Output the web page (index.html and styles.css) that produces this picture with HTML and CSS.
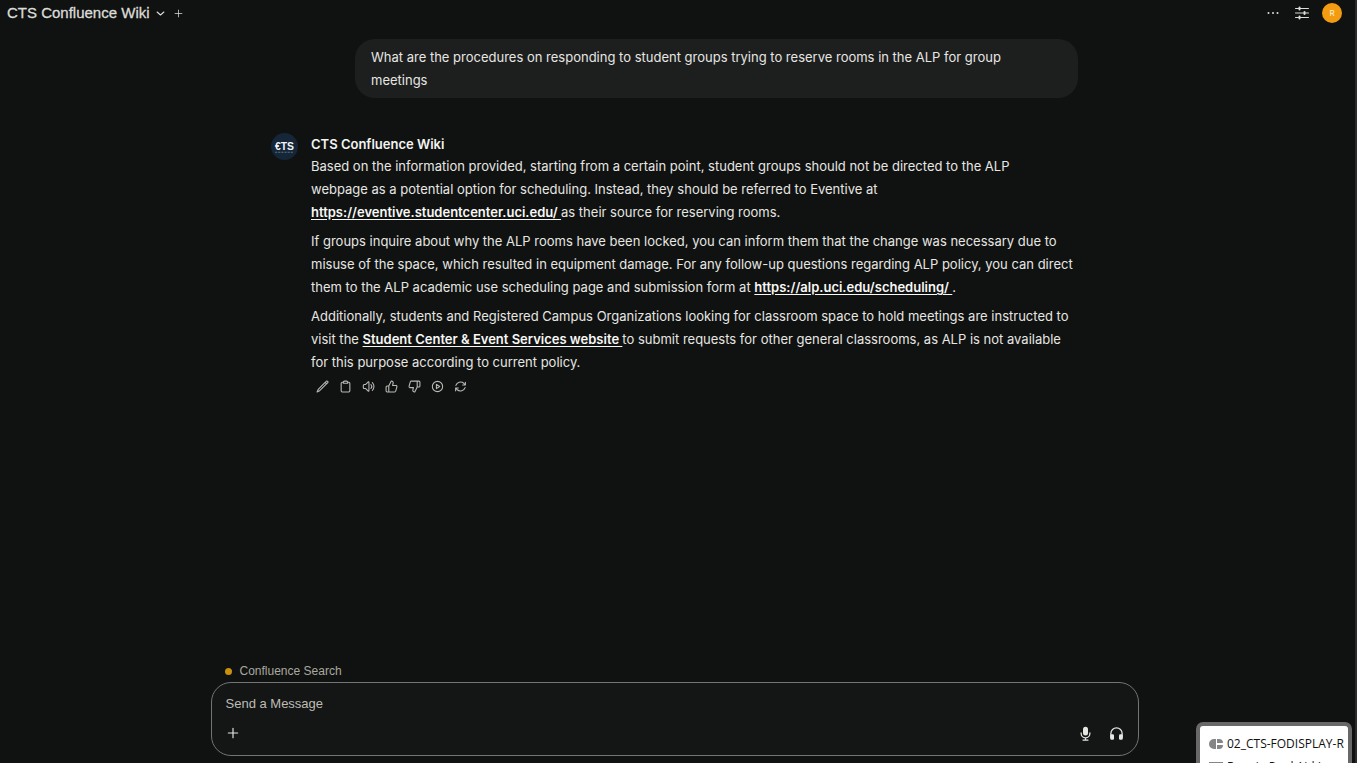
FILE: index.html
```html
<!DOCTYPE html>
<html lang="en">
<head>
<meta charset="utf-8">
<title>CTS Confluence Wiki</title>
<link rel="stylesheet" href="styles.css">
</head>
<body>
<div class="app">
  <header class="topbar">
    <button class="model-picker" type="button">CTS Confluence Wiki
      <svg class="chevron" viewBox="0 0 24 24"><path d="m3 8 9 8 9-8"/></svg>
    </button>
    <button class="icon-button add-model" type="button" aria-label="Add model"><svg viewBox="0 0 24 24"><path d="M12 3v18M3 12h18"/></svg></button>
    <div class="top-actions">
      <button class="icon-button" type="button" aria-label="More"><svg class="dots" viewBox="0 0 14 14"><circle cx="2.500" cy="7" r="1"/><circle cx="7" cy="7" r="1"/><circle cx="11.500" cy="7" r="1"/></svg></button>
      <button class="icon-button" type="button" aria-label="Controls"><svg class="controls" viewBox="0 0 14 14"><path d="M.5 2.500h13M.5 7h13M.5 11.500h13"/><path class="knobs" d="M4.500 1.500v2M9.500 6v2M4.500 10.500v2"/></svg></button>
      <button class="user-badge" type="button" aria-label="Account">R</button>
    </div>
  </header>
  <main class="thread">
    <p class="question">What are the procedures on responding to student groups trying to reserve rooms in the ALP for group meetings</p>
    <article class="answer">
      <svg class="avatar" viewBox="0 0 26 26" role="img" aria-label="CTS"><circle cx="13" cy="13" r="13"/><text x="13" y="16" text-anchor="middle">€TS</text><path d="M4 18.500h18"/></svg>
      <div class="answer-body">
        <h2>CTS Confluence Wiki</h2>
        <p class="lead">Based on the information provided, starting from a certain point, student groups should not be directed to the ALP webpage as a potential option for scheduling. Instead, they should be referred to Eventive at <a href="https://eventive.studentcenter.uci.edu/">https://eventive.studentcenter.uci.edu/ </a>as their source for reserving rooms.</p>
        <p>If groups inquire about why the ALP rooms have been locked, you can inform them that the change was necessary due to misuse of the space, which resulted in equipment damage. For any follow-up questions regarding ALP policy, you can direct them to the ALP academic use scheduling page and submission form at <a href="https://alp.uci.edu/scheduling/">https://alp.uci.edu/scheduling/ </a>.</p>
        <p>Additionally, students and Registered Campus Organizations looking for classroom space to hold meetings are instructed to visit the <a href="#services">Student Center &amp; Event Services website </a>to submit requests for other general classrooms, as ALP is not available for this purpose according to current policy.</p>
        <div class="message-actions">
          <button type="button" aria-label="Edit"><svg viewBox="0 0 24 24"><path d="m16.900 4.500 1.700-1.700a1.900 1.900 0 1 1 2.600 2.600L6.800 19.800 2 22l2.200-4.800L16.900 4.500Zm0 0 2.600 2.600"/></svg></button>
          <button type="button" aria-label="Copy"><svg viewBox="0 0 24 24"><path d="M8 4H6a2 2 0 0 0-2 2v14a2 2 0 0 0 2 2h12a2 2 0 0 0 2-2V6a2 2 0 0 0-2-2h-2M10 2h4a2 2 0 0 1 2 2v2H8V4a2 2 0 0 1 2-2Z"/></svg></button>
          <button type="button" aria-label="Read aloud"><svg viewBox="0 0 24 24"><path d="M19.100 4.900a10 10 0 0 1 0 14.200M16.500 8.500a5 5 0 0 1 0 7M6.800 8.200l4.700-4.700c.5-.5 1.300-.2 1.300.5v16c0 .7-.8 1-1.300.5l-4.700-4.700H4.500c-.9 0-1.700-.5-1.900-1.400a10 10 0 0 1 0-4.800c.2-.9 1-1.400 1.900-1.400Z"/></svg></button>
          <button type="button" aria-label="Good response"><svg viewBox="0 0 24 24"><path d="M7 11v11M15 6l-1 4h6a2 2 0 0 1 2 2.600l-2.300 8A2 2 0 0 1 17.700 22H4a2 2 0 0 1-2-2v-7a2 2 0 0 1 2-2h3l4.500-9A3.100 3.100 0 0 1 15 6Z"/></svg></button>
          <button type="button" aria-label="Bad response"><svg viewBox="0 0 24 24"><path d="M17 13V2M9 18l1-4H4a2 2 0 0 1-2-2.600l2.300-8A2 2 0 0 1 6.300 2H20a2 2 0 0 1 2 2v7a2 2 0 0 1-2 2h-3l-4.500 9A3.100 3.100 0 0 1 9 18Z"/></svg></button>
          <button type="button" aria-label="Continue response"><svg viewBox="0 0 24 24"><circle cx="12" cy="12" r="9.500"/><path d="m10 8 6 4-6 4Z"/></svg></button>
          <button type="button" aria-label="Regenerate"><svg viewBox="0 0 24 24"><path d="M16 9.300h5V4M3 20v-5.300h5M3.500 10a9 9 0 0 1 14.500-4l3 3.300M20.500 14A9 9 0 0 1 6 18l-3-3.300"/></svg></button>
        </div>
      </div>
    </article>
  </main>
  <footer class="dock">
    <div class="status"><span class="status-dot"></span>Confluence Search</div>
    <form class="composer">
      <input type="text" aria-label="Message" placeholder="Send a Message">
      <div class="composer-tools">
        <button class="icon-button" type="button" aria-label="Add attachment"><svg class="plus" viewBox="0 0 12 12"><path d="M6 2v8M2 6h8"/></svg></button>
        <div class="voice-tools">
          <button class="icon-button" type="button" aria-label="Record voice"><svg class="solid" viewBox="0 0 24 24"><rect x="8" y="1" width="8" height="14" rx="4"/><path d="M5 11v1a7 7 0 0 0 14 0v-1M12 19v3M8 22.500h8"/></svg></button>
          <button class="icon-button" type="button" aria-label="Voice call"><svg class="solid" viewBox="0 0 24 24"><path d="M3 18v-6a9 9 0 0 1 18 0v6"/><rect x="2" y="13" width="6" height="9" rx="2"/><rect x="16" y="13" width="6" height="9" rx="2"/></svg></button>
        </div>
      </div>
    </form>
  </footer>
  <aside class="desktop-popup">
    <div class="popup-item"><svg viewBox="0 0 14 10"><path d="M5 0h2v10H5A5 5 0 0 1 5 0ZM8 0h2a4 4 0 0 1 4 4H8ZM8 6h6a4 4 0 0 1-4 4H8Z"/></svg>02_CTS-FODISPLAY-R</div>
    <div class="popup-item"><svg viewBox="0 0 14 10"><path d="M0 0h14v10H0Z"/></svg>Rennie Pool Aid L</div>
  </aside>
</div>
</body>
</html>
```
FILE: styles.css
```css
* { box-sizing: border-box; }
body { margin: 0; background: #101211; color: #e6e6e3; font: 13px/23px Inter, sans-serif; }
button, input { padding: 0; border: 0; background: none; color: inherit; font: inherit; }
svg { display: block; fill: none; stroke: currentColor; stroke-width: 2; stroke-linecap: round; stroke-linejoin: round; }
.app { position: relative; display: flex; flex-direction: column; height: 100vh; padding-right: 6px; overflow: hidden; border-right: 2px solid #2b2b2d; }
.topbar { display: flex; align-items: center; height: 26px; padding: 0 7px; color: #dcdcd8; }
.model-picker { display: flex; align-items: center; gap: 6px; font: 500 15px/20px "Liberation Sans", Arial, sans-serif; -webkit-text-stroke: 0.3px currentColor; }
.chevron { width: 9px; height: 9px; stroke-width: 3; }
.icon-button { display: grid; place-items: center; }
.add-model { margin-left: 9px; }
.add-model svg { width: 9px; height: 9px; }
.top-actions { display: flex; align-items: center; gap: 13px; margin-left: auto; }
.dots { width: 14px; height: 14px; fill: currentColor; stroke: none; }
.controls { width: 14px; height: 14px; stroke-width: 1; }
.knobs { stroke-width: 2; }
.top-actions .icon-button + .icon-button { margin-left: 2px; }
.user-badge { width: 20px; height: 20px; border-radius: 50%; background: #f39c12; color: #fff3d8; font-size: 8px; line-height: 20px; }
.thread { flex: 1; width: 100%; max-width: 807px; margin: 0 auto; padding-top: 13px; }
.question { width: fit-content; max-width: 723px; margin: 0 0 0 auto; padding: 7px 24px 6px 16px; border-radius: 20px; background: #1d1f1e; }
.answer { display: flex; gap: 13px; margin-top: 35px; }
.avatar { flex: none; width: 27px; height: 27px; }
.avatar circle { fill: #142638; stroke: none; }
.avatar path { stroke: #62717f; stroke-width: 1; stroke-linecap: butt; stroke-dasharray: 2 1; }
.avatar text { fill: #f2f5f7; stroke: none; font: 700 10px "Liberation Sans", sans-serif; }
.answer-body { flex: 1; padding-top: 1px; }
.answer h2 { margin: 0; color: #f4f4f2; font: 600 13px/21px Inter, sans-serif; }
.answer p { margin: 0 0 6px; }
.answer .lead { padding-right: 12px; }
.answer a { color: #f8f8f6; font-weight: 600; text-underline-offset: 2px; }
.message-actions { display: flex; gap: 10px; padding-left: 5px; color: #b9b9b6; }
.message-actions svg { width: 13px; height: 13px; }
.dock { width: 100%; max-width: 928px; margin: 0 auto; padding-bottom: 7px; }
.status { display: flex; align-items: center; gap: 8px; padding: 0 14px; color: #aaa89f; font: 12px/22px "Liberation Sans", Arial, sans-serif; }
.status-dot { width: 7px; height: 7px; border-radius: 50%; background: #c8920b; }
.composer { padding: 10px 14px; border: 1px solid #737572; border-radius: 20px; background: #131615; }
.composer input { display: block; width: 100%; height: 22px; font: 13px/22px "Liberation Sans", Arial, sans-serif; }
.composer input::placeholder { color: #bdbcb6; opacity: 1; }
.composer-tools { display: flex; align-items: center; justify-content: space-between; height: 30px; padding: 8px 0 2px; }
.plus { width: 14px; height: 14px; stroke-width: 1; }
.voice-tools { display: flex; gap: 16px; }
.solid { width: 15px; height: 15px; }
.solid rect { fill: currentColor; stroke: none; }
.desktop-popup { position: absolute; right: 3px; bottom: 0; width: 156px; height: 41px; padding: 6px 0 0 9px; overflow: hidden; border: 4px solid #686868; border-bottom: 0; border-radius: 7px 7px 0 0; background: #fff; color: #111; font: 12px/23px "Open Sans", sans-serif; white-space: nowrap; }
.popup-item { display: flex; align-items: center; gap: 4px; }
.popup-item svg { width: 14px; height: 10px; fill: #858585; stroke: none; }
```
